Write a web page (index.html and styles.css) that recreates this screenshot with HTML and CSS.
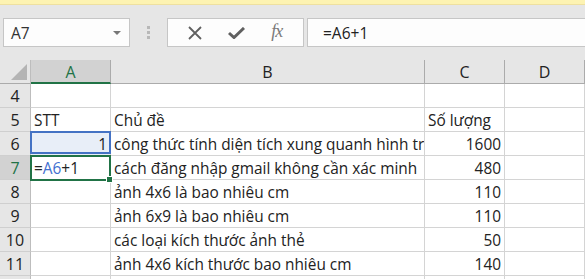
FILE: index.html
```html
<html>
  <head>
    <link rel="stylesheet" href="styles.css">
  </head>
  <body>
    <div class="notice"></div>

    <div class="formula-bar">
      <div class="name-box">
        <span>A7</span>
        <span class="caret"></span>
      </div>
      <div class="grip"><i></i><i></i><i></i></div>
      <div class="fx-buttons">
        <svg width="16" height="14" viewBox="0 0 16 14">
          <path d="M2 1 L14 13 M14 1 L2 13" stroke="#606060" stroke-width="1.8" fill="none" />
        </svg>
        <svg width="17" height="12" viewBox="0 0 17 12">
          <path d="M1 6 L6 10.5 L16 1" stroke="#606060" stroke-width="3" fill="none" />
        </svg>
        <span class="fx">fx</span>
      </div>
      <div class="formula-input">=A6+1</div>
    </div>

    <div class="sheet">
      <div class="corner"><span class="select-all"></span></div>
      <div class="col-head active">A</div>
      <div class="col-head">B</div>
      <div class="col-head">C</div>
      <div class="col-head">D</div>

      <div class="row-head">4</div>
      <div class="cell"></div>
      <div class="cell"></div>
      <div class="cell"></div>
      <div class="cell"></div>

      <div class="row-head">5</div>
      <div class="cell">STT</div>
      <div class="cell">Chủ đề</div>
      <div class="cell">Số lượng</div>
      <div class="cell"></div>

      <div class="row-head">6</div>
      <div class="cell num ref">1</div>
      <div class="cell">công thức tính diện tích xung quanh hình trụ</div>
      <div class="cell num">1600</div>
      <div class="cell"></div>

      <div class="row-head active">7</div>
      <div class="cell current">=<span class="ref-text">A6</span>+1</div>
      <div class="cell">cách đăng nhập gmail không cần xác minh</div>
      <div class="cell num">480</div>
      <div class="cell"></div>

      <div class="row-head">8</div>
      <div class="cell"></div>
      <div class="cell">ảnh 4x6 là bao nhiêu cm</div>
      <div class="cell num">110</div>
      <div class="cell"></div>

      <div class="row-head">9</div>
      <div class="cell"></div>
      <div class="cell">ảnh 6x9 là bao nhiêu cm</div>
      <div class="cell num">110</div>
      <div class="cell"></div>

      <div class="row-head">10</div>
      <div class="cell"></div>
      <div class="cell">các loại kích thước ảnh thẻ</div>
      <div class="cell num">50</div>
      <div class="cell"></div>

      <div class="row-head">11</div>
      <div class="cell"></div>
      <div class="cell">ảnh 4x6 kích thước bao nhiêu cm</div>
      <div class="cell num">140</div>
      <div class="cell"></div>

      <div class="row-head"></div>
      <div class="cell"></div>
      <div class="cell"></div>
      <div class="cell"></div>
      <div class="cell"></div>
    </div>
  </body>
</html>
```

FILE: styles.css
```css
* {
  box-sizing: border-box;
}

body {
  margin: 0;
  background-color: #e6e6e6;
  font-family: "Open Sans", sans-serif;
  color: #222;
  height: 279px;
  overflow: hidden;
}

.notice {
  height: 5px;
  background-color: #fdf3b2;
  border-bottom: 1px solid #eee0a0;
}

/* formula bar */

.formula-bar {
  display: flex;
  align-items: stretch;
  height: 29px;
  margin: 13px 0 13px 3px;
}

.name-box {
  width: 127px;
  display: flex;
  align-items: center;
  justify-content: space-between;
  padding: 0 8px 0 7px;
  background-color: #fdfdfd;
  border: 1px solid #c6c6c6;
  font-size: 15.5px;
  color: #333;
}

.caret {
  width: 0;
  height: 0;
  border-left: 4px solid transparent;
  border-right: 4px solid transparent;
  border-top: 4px solid #777;
  margin-top: 1px;
}

.grip {
  width: 37px;
  display: flex;
  flex-direction: column;
  align-items: center;
  justify-content: center;
  gap: 2px;
}

.grip i {
  width: 3px;
  height: 3px;
  background-color: #b8b8b8;
}

.fx-buttons {
  width: 137px;
  display: flex;
  align-items: center;
  justify-content: space-around;
  padding: 0 8px 0 6px;
  background-color: #fdfdfd;
  border: 1px solid #c6c6c6;
}

.fx {
  font-family: "Liberation Serif", serif;
  font-style: italic;
  font-size: 18px;
  color: #7a7a7a;
  letter-spacing: -1px;
  margin-top: -2px;
}

.formula-input {
  flex: 1;
  margin-left: 3px;
  display: flex;
  align-items: center;
  padding-left: 15px;
  background-color: #fdfdfd;
  border: 1px solid #c6c6c6;
  border-right: none;
  font-size: 15.5px;
  color: #222;
}

/* grid */

.sheet {
  display: grid;
  grid-template-columns: 31px 80px 314px 80px 80px;
  grid-auto-rows: 24px;
  background-color: #fff;
}

.corner,
.col-head,
.row-head {
  background-color: #e6e6e6;
  color: #222;
}

.corner {
  position: relative;
  border-right: 1px solid #bdbdbd;
  border-bottom: 1px solid #ababab;
}

.select-all {
  position: absolute;
  left: 11px;
  top: 4px;
  width: 0;
  height: 0;
  border-left: 16px solid transparent;
  border-bottom: 16px solid #b4b4b4;
}

.col-head {
  display: flex;
  align-items: center;
  justify-content: center;
  font-size: 16px;
  border-right: 1px solid #ababab;
  border-bottom: 1px solid #ababab;
  padding-top: 1px;
}

.col-head.active {
  background-color: #d2d2d2;
  color: #217346;
  border-bottom: 2px solid #217346;
}

.row-head {
  display: flex;
  align-items: center;
  justify-content: center;
  font-size: 16px;
  border-right: 1px solid #bdbdbd;
  border-bottom: 1px solid #cfcfcf;
  padding-top: 1px;
}

.row-head.active {
  background-color: #d2d2d2;
  color: #217346;
}

.cell {
  position: relative;
  display: flex;
  align-items: flex-end;
  padding: 0 3px 2px 3px;
  border-right: 1px solid #d4d4d4;
  border-bottom: 1px solid #d4d4d4;
  font-size: 15.4px;
  line-height: 16px;
  white-space: nowrap;
  overflow: hidden;
}

.cell.num {
  justify-content: flex-end;
}

.cell.ref {
  background-color: #e8eef8;
  overflow: visible;
}

.cell.ref::after {
  content: "";
  position: absolute;
  left: -1px;
  top: -1px;
  right: -1px;
  bottom: 1px;
  border: 2px solid #4472c4;
}

.cell.current {
  overflow: visible;
}

.cell.current::after {
  content: "";
  position: absolute;
  left: -1px;
  top: -1px;
  right: -1px;
  bottom: -2px;
  border: 2px solid #217346;
}

.cell.current::before {
  content: "";
  position: absolute;
  right: -3px;
  bottom: -4px;
  width: 5px;
  height: 5px;
  background-color: #217346;
  border: 1px solid #fff;
  z-index: 1;
}

.ref-text {
  color: #3f6fd0;
}
```
